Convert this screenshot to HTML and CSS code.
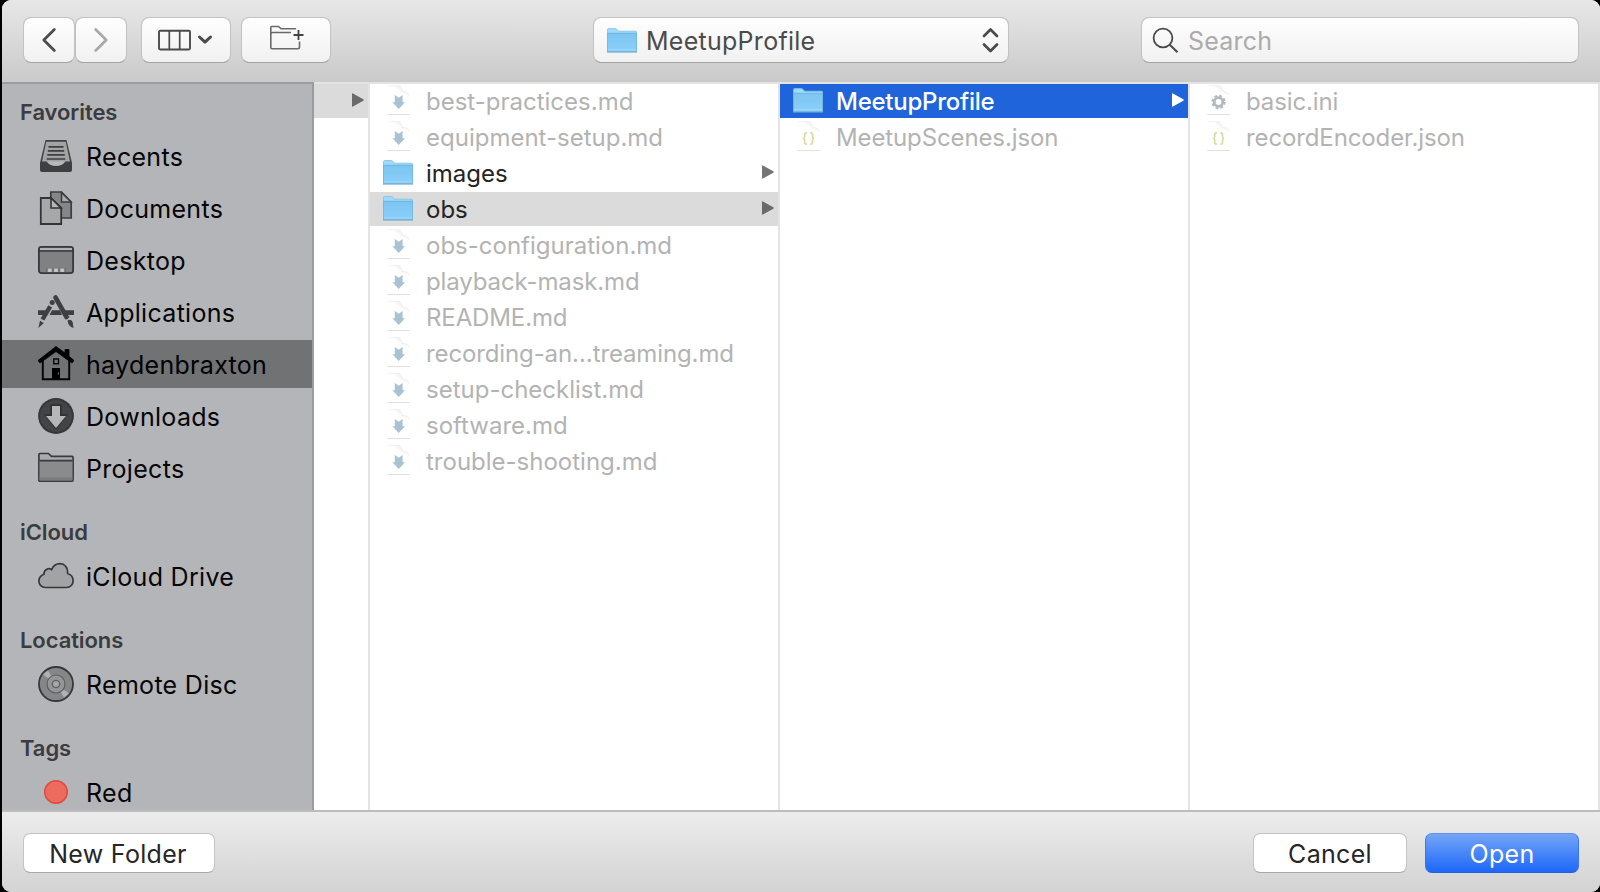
FILE: index.html
```html
<!DOCTYPE html>
<html lang="en">
<head>
<meta charset="utf-8">
<title>Open</title>
<link rel="stylesheet" href="styles.css">
</head>
<body>
<svg class="defs" width="0" height="0" aria-hidden="true">
  <defs>
    <linearGradient id="blue" x1="0" y1="0" x2="0" y2="1"><stop offset="0" stop-color="#7cc6f1"/><stop offset="1" stop-color="#8acffa"/></linearGradient>
    <linearGradient id="curl" x1="0" y1="1" x2="1" y2="0"><stop offset="0.4" stop-color="#ffffff"/><stop offset="1" stop-color="#e9e9e9"/></linearGradient>
    <symbol id="folder" viewBox="0 0 30 25">
      <path d="M0.5 23.5V1.6Q0.5 0.5 1.6 0.5H8.2Q9 0.5 9.6 1.1L11.6 3.2H28.6Q29.5 3.2 29.5 4.1V23.5Z" fill="#a0d9f9" stroke="#7fc1e6" stroke-width=".8"/>
      <path d="M0.3 5.2H29.7V23.6H0.3Z" fill="url(#blue)"/>
      <path d="M0.3 5.3H29.7" stroke="#68b4df" stroke-width=".9"/>
      <path d="M0.4 5V23.6M29.6 5V23.6" stroke="#6cb5dc" stroke-width=".8"/>
      <path d="M1 21.8H29" stroke="#a5dcfb" stroke-width=".8"/>
      <path d="M0 24H30" stroke="#6ba9cb" stroke-width="1.2"/>
    </symbol>
    <symbol id="page" viewBox="0 0 24 30">
      <path d="M1 0.5H12.500Q15 1 15.500 6.500Q21 6 22.500 10V12Q20 8.500 14 8L8 1.500Z" fill="url(#curl)"/>
      <path d="M1 0.400H13M14.500 3L15.500 6.500Q20 6 22.300 9.500" fill="none" stroke="#ededed" stroke-width=".8"/>
      <path d="M0.300 29.500H22.700" stroke="#e0e0e0" stroke-width="1"/>
    </symbol>
    <symbol id="md" viewBox="0 0 24 30">
      <use href="#page" width="24" height="30"/>
      <path d="M7.800 10L11.700 12.700L15.600 10V17.200H18L11.700 24L5.400 17.200H7.800Z" fill="#a9c3d2"/>
    </symbol>
    <symbol id="json" viewBox="0 0 24 30">
      <use href="#page" width="24" height="30"/>
      <path d="M9.900 11.900Q7.700 11.700 7.700 13.600V15.600Q7.700 17.400 6.200 17.600Q7.700 17.800 7.700 19.600V21.600Q7.700 23.400 9.900 23.200M13.300 11.900Q15.500 11.700 15.500 13.600V15.600Q15.500 17.400 17 17.600Q15.500 17.800 15.500 19.600V21.600Q15.500 23.400 13.300 23.200" fill="none" stroke="#dadaa2" stroke-width="1.700"/>
    </symbol>
    <symbol id="ini" viewBox="0 0 24 30">
      <use href="#page" width="24" height="30"/>
      <circle cx="11.500" cy="17" r="4.300" fill="none" stroke="#b0babe" stroke-width="2.800"/>
      <circle cx="11.500" cy="17" r="6.200" fill="none" stroke="#b0babe" stroke-width="2" stroke-dasharray="2.700 2.170"/>
    </symbol>
    <symbol id="arrow" viewBox="0 0 12 14"><path d="M0 .6Q0 0 .900.4L11.300 6.200Q12.300 7 11.300 7.700L.9 13.600Q0 14 0 13.200Z" fill="currentColor"/></symbol>
  </defs>
</svg>
<main class="window">
  <header class="toolbar">
    <div class="group nav">
      <button class="tool back" aria-label="Back"><svg width="14" height="24" viewBox="0 0 14 24"><path d="M12.300 1.500L1.800 12L12.300 22.500" fill="none" stroke="#4c4c4c" stroke-width="2.700" stroke-linecap="round" stroke-linejoin="round"/></svg></button>
      <button class="tool next" aria-label="Forward"><svg width="14" height="24" viewBox="0 0 14 24"><path d="M1.700 1.500L12.200 12L1.700 22.500" fill="none" stroke="#a9a9a9" stroke-width="2.700" stroke-linecap="round" stroke-linejoin="round"/></svg></button>
    </div>
    <button class="tool view" aria-label="View">
      <svg width="56" height="22" viewBox="0 0 56 22"><rect x="1" y="1.800" width="31" height="18.700" rx="1.200" fill="none" stroke="#4a4a4a" stroke-width="1.900"/><path d="M11.300 2V20.500M21.700 2V20.500" stroke="#4a4a4a" stroke-width="1.700"/><path d="M41.500 8L47 13.100L52.500 8" fill="none" stroke="#4a4a4a" stroke-width="3" stroke-linecap="round" stroke-linejoin="round"/></svg>
    </button>
    <button class="tool create" aria-label="New folder">
      <svg width="36" height="26" viewBox="0 0 36 26" fill="none" stroke="#6a6a6a" stroke-width="1.600"><path d="M27 3.800H12L9.600 1.500H2.600Q1.800 1.500 1.800 2.500V22.500Q1.800 23.700 3 23.700H28.500Q30.500 23.700 30.500 22V16.500M2 9Q2 7.500 3.500 7.500H22"/><path d="M29.500 5V15M24.500 10H34.500" stroke="#444" stroke-width="1.800"/></svg>
    </button>
    <button class="tool path"><svg class="folder" width="30" height="25"><use href="#folder"/></svg><span>MeetupProfile</span>
      <svg class="updown" width="17" height="26" viewBox="0 0 17 26"><path d="M2 9L8.500 2.500L15 9M2 17.500L8.500 24L15 17.500" fill="none" stroke="#4a4a4a" stroke-width="2.700" stroke-linecap="round" stroke-linejoin="round"/></svg>
    </button>
    <div class="tool search"><svg width="27" height="27" viewBox="0 0 27 27"><circle cx="11" cy="11" r="9.400" fill="none" stroke="#4a4a4a" stroke-width="1.800"/><path d="M17.500 17.500L25.500 25.300" stroke="#4a4a4a" stroke-width="2.100"/></svg><span>Search</span></div>
  </header>
  <div class="content">
    <nav class="sidebar">
      <h2>Favorites</h2>
      <a class="item"><svg viewBox="0 0 36 36"><path d="M7.500 2H28.500L34 25V32Q34 34 32 34H4Q2 34 2 32V25Z" fill="#3e3f40"/><path d="M8.200 3.700H27.800L32 23.500H27Q23 27 18 27T9 23.500H4Z" fill="#a2a3a5"/><path d="M9 23.500H27V24Q24 28 18 28T9 24Z" fill="#b8b9bb"/><path d="M10.500 8.800H25.500M9.800 12.800H26.200M9.200 16.800H26.800M8.700 21H27.300" stroke="#3e3f40" stroke-width="1.700"/></svg><span>Recents</span></a>
      <a class="item"><svg viewBox="0 0 36 36"><path d="M12.800 2H23.500L33.200 12V28H12.800Z" fill="#858688" stroke="#3c3d3e" stroke-width="1.700"/><path d="M23.500 2.500V12H33Z" fill="#aaabad" stroke="#3c3d3e" stroke-width="1.500"/><path d="M2.800 8H12.800L23.200 18V34H2.800Z" fill="#a7a8aa" stroke="#333435" stroke-width="1.800"/><path d="M13 8V18H23Z" fill="#b5b6b8" stroke="#333435" stroke-width="1.600"/></svg><span>Documents</span></a>
      <a class="item"><svg viewBox="0 0 36 36"><rect x=".9" y="4.900" width="34.200" height="26.200" rx="2.500" fill="#808183" stroke="#37383a" stroke-width="1.800"/><path d="M2 6H34V8H2Z" fill="#b0b1b3"/><path d="M1 9H35" stroke="#37383a" stroke-width="1.600"/><path d="M8 26H28V30H8Z" fill="#727375"/><path d="M9.800 26.500H13.800V30H9.800ZM16 26.500H20V30H16ZM22.200 26.500H26.200V30H22.200Z" fill="#c2c3c5"/></svg><span>Desktop</span></a>
      <a class="item"><svg viewBox="0 0 36 36"><path d="M0 16.200H10.500L8 21H0ZM14 16.200H22L24 21H11.500ZM26 16.200H36V21H28.500Z" fill="#3e3f40"/><path d="M17.500 3.500L28.500 23" stroke="#3e3f40" stroke-width="4.600" stroke-linecap="round"/><path d="M27.300 24.800L31.400 22.500" stroke="#3e3f40" stroke-width="1.300"/><path d="M29.500 26.500Q33.500 24.500 34.800 28.500Q35 31 35.500 34Q30 32.500 29.500 26.500Z" fill="#3e3f40"/><path d="M12.200 12.400L4.500 25.500" stroke="#3e3f40" stroke-width="4.400"/><circle cx="14.200" cy="8.500" r="2.500" fill="#3e3f40"/><path d="M2 26.800L5.800 29L.3 34Z" fill="#3e3f40"/></svg><span>Applications</span></a>
      <a class="item selected"><svg viewBox="0 0 36 36"><path d="M4.800 14V33.200H31.200V14" fill="none" stroke="#050505" stroke-width="1.900"/><path d="M18 .500L27 7V3.500H31V10.300L36 14.500L34 17L18 5.500L2 17L0 14.500Z" fill="#000" stroke="#000" stroke-width=".8"/><path d="M15.700 13H20.500V17.800H15.700Z" fill="none" stroke="#090909" stroke-width="1.400"/><path d="M14 22H22V33H14Z" fill="#000"/><path d="M20.300 26.300V28.500" stroke="#777" stroke-width="1"/></svg><span>haydenbraxton</span></a>
      <a class="item"><svg viewBox="0 0 36 36"><circle cx="18" cy="18" r="17.900" fill="#353638"/><circle cx="18" cy="18" r="16" fill="#434446"/><path d="M12.300 6.200H23.700V16.200H30.200L18 31.500L5.800 16.200H12.300Z" fill="#303133"/><path d="M14 8H22V18H28L18 30L8 18H14Z" fill="#b6b7b9"/></svg><span>Downloads</span></a>
      <a class="item"><svg viewBox="0 0 36 36"><path d="M.9 31V4.500Q.9 3.500 2 3.500H10.500L13.500 6.400H34Q35.100 6.400 35.100 7.500V30.100Q35.100 31.100 34 31.100H2Q.9 31.100 .9 30Z" fill="#aaabad" stroke="#3a3b3d" stroke-width="1.700"/><path d="M1.700 11H34.300V30.200H1.700Z" fill="#8a8b8d"/><path d="M1.700 27.500H34.300V30.200H1.700Z" fill="#7a7b7d"/><path d="M1.500 10.600H34.500" stroke="#3a3b3d" stroke-width="1.700"/></svg><span>Projects</span></a>
      <h2>iCloud</h2>
      <a class="item"><svg viewBox="0 0 36 36"><path d="M7.500 29.500C3.500 29.500 .9 26.500 .9 23.200C.9 19.500 3 17.500 6 16.300C5.500 11.800 10.500 9.300 13.600 11.600C15.500 7.500 18.500 5.700 22 5.700C26.500 5.700 30 9.200 29.600 15.500C33 16.500 35.100 19.300 35.100 22.800C35.100 26.500 32.500 29.500 28.500 29.500Z" fill="#a2a3a5" stroke="#37383a" stroke-width="1.700"/></svg><span>iCloud Drive</span></a>
      <h2>Locations</h2>
      <a class="item"><svg viewBox="0 0 36 36"><circle cx="18" cy="18" r="17" fill="#858688" stroke="#37383a" stroke-width="1.800"/><path d="M18 18L5 8.500L10 4.500ZM18 18L31 27.500L26 31.500Z" fill="#b0b1b3"/><circle cx="18" cy="18" r="9" fill="#959698" stroke="#5d5e60" stroke-width="1.200"/><circle cx="18" cy="18" r="3.700" fill="#a6a7a9" stroke="#5d5e60" stroke-width="1.300"/></svg><span>Remote Disc</span></a>
      <h2>Tags</h2>
      <a class="item"><svg viewBox="0 0 36 36"><circle cx="18" cy="18" r="11.300" fill="#ec6a5e" stroke="#e24638" stroke-width="1.400"/></svg><span>Red</span></a>
    </nav>
    <section class="column parent"><div class="row chosen"><svg class="arrow"><use href="#arrow"/></svg></div></section>
    <section class="column">
      <div class="row file"><svg class="doc"><use href="#md"/></svg><span>best-practices.md</span></div>
      <div class="row file"><svg class="doc"><use href="#md"/></svg><span>equipment-setup.md</span></div>
      <div class="row"><svg class="folder" width="30" height="25"><use href="#folder"/></svg><span>images</span><svg class="arrow"><use href="#arrow"/></svg></div>
      <div class="row chosen"><svg class="folder" width="30" height="25"><use href="#folder"/></svg><span>obs</span><svg class="arrow"><use href="#arrow"/></svg></div>
      <div class="row file"><svg class="doc"><use href="#md"/></svg><span>obs-configuration.md</span></div>
      <div class="row file tight"><svg class="doc"><use href="#md"/></svg><span>playback-mask.md</span></div>
      <div class="row file tight"><svg class="doc"><use href="#md"/></svg><span>README.md</span></div>
      <div class="row file tight"><svg class="doc"><use href="#md"/></svg><span>recording-an…treaming.md</span></div>
      <div class="row file"><svg class="doc"><use href="#md"/></svg><span>setup-checklist.md</span></div>
      <div class="row file"><svg class="doc"><use href="#md"/></svg><span>software.md</span></div>
      <div class="row file"><svg class="doc"><use href="#md"/></svg><span>trouble-shooting.md</span></div>
    </section>
    <section class="column">
      <div class="row active"><svg class="folder" width="30" height="25"><use href="#folder"/></svg><span>MeetupProfile</span><svg class="arrow"><use href="#arrow"/></svg></div>
      <div class="row file tight"><svg class="doc"><use href="#json"/></svg><span>MeetupScenes.json</span></div>
    </section>
    <section class="column">
      <div class="row file tight"><svg class="doc"><use href="#ini"/></svg><span>basic.ini</span></div>
      <div class="row file tight"><svg class="doc"><use href="#json"/></svg><span>recordEncoder.json</span></div>
    </section>
  </div>
  <footer class="footer">
    <button class="push new">New Folder</button>
    <button class="push cancel">Cancel</button>
    <button class="push open">Open</button>
  </footer>
</main>
</body>
</html>
```
FILE: styles.css
```css
* { box-sizing: border-box; }
body {
  margin: 0;
  background: #000;
  font-family: Inter, "Liberation Sans", sans-serif;
  overflow: hidden;
}
.defs { position: absolute; }
button { font: inherit; margin: 0; padding: 0; }
svg { display: block; flex: none; }
.window {
  display: flex;
  flex-direction: column;
  height: 892px;
  margin-left: 2px;
  border-radius: 9px;
  overflow: hidden;
  background: #fff;
}

/* Toolbar */
.toolbar {
  display: flex;
  align-items: flex-start;
  height: 82px;
  padding: 17px 21px 0;
  background: linear-gradient(#e7e7e7, #cacaca);
}
.group { display: flex; }
.tool {
  display: flex;
  align-items: center;
  justify-content: center;
  height: 46px;
  border: 1px solid #c2c2c2;
  border-bottom-color: #a2a4a3;
  border-radius: 8px;
  background: linear-gradient(#fefefe, #f1f1f1);
  background-clip: padding-box;
}
.back, .next { width: 52px; }
.nav { width: 104px; }
.back { padding-right: 1px; }
.view { width: 90px; margin-left: 14px; }
.create { width: 90px; margin-left: 10px; }
.create svg { margin: -4px 0 0 1px; }
.path {
  width: 416px;
  margin-left: 262px;
  padding: 0 9px 0 13px;
  justify-content: flex-start;
  color: #4b4b4b;
  font-size: 25px;
}
.path span { margin-left: 9px; padding-top: 2px; letter-spacing: 0.27px; }
.updown { margin-left: auto; }
.search {
  width: 438px;
  margin-left: auto;
  padding-left: 10px;
  justify-content: flex-start;
  color: #ababab;
  font-size: 25px;
}
.search span { margin-left: 9px; padding-top: 2px; letter-spacing: 0.2px; }

/* Sidebar */
.content { display: flex; height: 730px; border-bottom: 2px solid #bcbcbc; }
.sidebar {
  width: 312px;
  height: 728px;
  padding-top: 10px;
  border-top: 2px solid #9c9da0;
  border-right: 2px solid #9b9c9f;
  background: #b4b5b8;
  overflow: hidden;
}
h2 {
  margin: 20px 0 0;
  padding-left: 18px;
  color: #3b3c3e;
  font-size: 22px;
  font-weight: 600;
  line-height: 36px;
  letter-spacing: -0.08px;
}
h2:first-child { margin: 0; }
.item {
  display: flex;
  align-items: center;
  height: 52px;
  padding-left: 36px;
  border: solid transparent;
  border-width: 2px 0;
  background-clip: padding-box;
  color: #050505;
  font-size: 25px;
}
.item svg { width: 36px; height: 36px; }
.item span { margin-left: 12px; padding-top: 2px; letter-spacing: 0.3px; }
.item.selected { background-color: #717274; color: #000; }

/* Browser columns */
.column {
  display: flex;
  flex-direction: column;
  gap: 2px;
  width: 410px;
  border-top: 2px solid #e3e3e3;
  border-right: 2px solid #e3e3e3;
}
.column.parent { width: 56px; }
.row {
  display: flex;
  align-items: center;
  height: 34px;
  padding: 0 4px 0 13px;
  color: #242424;
  font-size: 24px;
}
.row span { margin-left: 13px; }
.row .folder { margin-top: -2px; }
.row .doc { width: 24px; height: 30px; margin: -2px 2px 0 4px; }
.arrow { width: 12px; height: 14px; margin: -2px 0 0 auto; color: #757575; }
.chosen .arrow { color: #6a6a6a; }
.file { color: #b3b3b3; }
.tight { letter-spacing: -0.12px; }
.chosen { background: #dbdbdb; }
.active { background: #1f64da; color: #fff; font-weight: 500; letter-spacing: -0.25px; }
.active .arrow { color: #fff; }

/* Footer */
.footer {
  display: flex;
  height: 80px;
  padding: 21px 21px 0;
  background: linear-gradient(#ececec, #d3d3d3);
}
.push {
  height: 40px;
  padding-top: 2px;
  border: 1px solid #c4c4c4;
  border-bottom-color: #a9a9a9;
  border-radius: 7px;
  background: #fff;
  background-clip: padding-box;
  color: #262626;
  font-size: 25px;
  letter-spacing: 0.3px;
}
.new { width: 192px; padding-right: 2px; }
.cancel { width: 154px; margin-left: auto; }
.open {
  width: 154px;
  margin-left: 18px;
  border-color: #5c92ee #3977ed #245fe0;
  background: linear-gradient(#74a5f7, #1d67f8);
  color: #fff;
}
```
